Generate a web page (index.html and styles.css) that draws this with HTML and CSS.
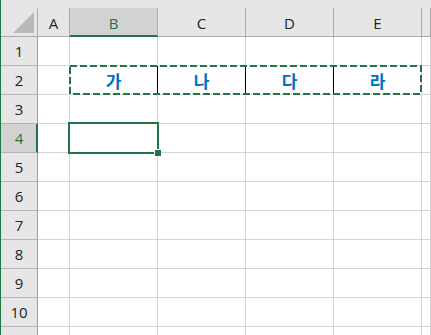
FILE: index.html
```html
<!DOCTYPE html>
<html>
<head>
<meta charset="utf-8">
<link rel="stylesheet" href="styles.css">
</head>
<body>
<div class="app">
  <div class="edge"></div>
  <div class="sheet">
    <div class="strip"></div>
    <div class="grid">
      <div class="corner"></div>
      <div class="ch">A</div><div class="ch sel">B</div><div class="ch">C</div><div class="ch">D</div><div class="ch">E</div><div class="ch"></div>

      <div class="rh">1</div><div class="c"></div><div class="c"></div><div class="c"></div><div class="c"></div><div class="c"></div><div class="c"></div>
      <div class="rh">2</div><div class="c"></div><div class="c k bk">가</div><div class="c k bk">나</div><div class="c k bk">다</div><div class="c k">라</div><div class="c"></div>
      <div class="rh">3</div><div class="c"></div><div class="c"></div><div class="c"></div><div class="c"></div><div class="c"></div><div class="c"></div>
      <div class="rh sel">4</div><div class="c"></div><div class="c"></div><div class="c"></div><div class="c"></div><div class="c"></div><div class="c"></div>
      <div class="rh">5</div><div class="c"></div><div class="c"></div><div class="c"></div><div class="c"></div><div class="c"></div><div class="c"></div>
      <div class="rh">6</div><div class="c"></div><div class="c"></div><div class="c"></div><div class="c"></div><div class="c"></div><div class="c"></div>
      <div class="rh">7</div><div class="c"></div><div class="c"></div><div class="c"></div><div class="c"></div><div class="c"></div><div class="c"></div>
      <div class="rh">8</div><div class="c"></div><div class="c"></div><div class="c"></div><div class="c"></div><div class="c"></div><div class="c"></div>
      <div class="rh">9</div><div class="c"></div><div class="c"></div><div class="c"></div><div class="c"></div><div class="c"></div><div class="c"></div>
      <div class="rh">10</div><div class="c"></div><div class="c"></div><div class="c"></div><div class="c"></div><div class="c"></div><div class="c"></div>
      <div class="rh"></div><div class="c"></div><div class="c"></div><div class="c"></div><div class="c"></div><div class="c"></div><div class="c"></div>
    </div>
  </div>
  <svg class="ants" width="353" height="30" viewBox="0 0 353 30">
    <rect x="1" y="1" width="351" height="28" fill="none" stroke="#217346" stroke-width="2" stroke-dasharray="7 3"/>
  </svg>
  <div class="active"></div>
  <div class="handle"></div>
</div>
</body>
</html>
```
FILE: styles.css
```css
html, body {
  margin: 0;
  padding: 0;
  background: #ffffff;
  overflow: hidden;
}
.app {
  position: relative;
  display: flex;
  width: 431px;
  height: 335px;
  overflow: hidden;
  font-family: "Open Sans", "Liberation Sans", sans-serif;
}
.edge {
  width: 1px;
  background: #217346;
  flex: none;
}
.sheet {
  flex: 1;
  display: flex;
  flex-direction: column;
}
.strip {
  height: 8px;
  background: #e6e6e6;
  flex: none;
}
.grid {
  display: grid;
  grid-template-columns: 37px 32px 88px 88px 88px 88px 1fr;
  grid-template-rows: 29px repeat(11, 29px);
}
.grid > div {
  box-sizing: border-box;
}
.corner {
  position: relative;
  background: #e6e6e6;
  border-right: 1px solid #ababab;
  border-bottom: 1px solid #ababab;
}
.corner::after {
  content: "";
  position: absolute;
  left: 12px;
  top: 4px;
  width: 21px;
  height: 21px;
  background: #b9b9b9;
  clip-path: polygon(100% 0, 100% 100%, 0 100%);
}
.ch {
  background: #e6e6e6;
  border-right: 1px solid #ababab;
  border-bottom: 1px solid #ababab;
  display: flex;
  align-items: center;
  justify-content: center;
  font-size: 15px;
  color: #222222;
  padding-top: 1px;
}
.ch.sel {
  background: #d2d2d2;
  border-bottom: 2px solid #217346;
  color: #217346;
  padding-top: 2px;
}
.rh {
  background: #e6e6e6;
  border-right: 1px solid #9e9e9e;
  border-bottom: 1px solid #b4b4b4;
  display: flex;
  align-items: center;
  justify-content: center;
  font-size: 15px;
  color: #222222;
}
.rh.sel {
  background: #d2d2d2;
  border-right: 2px solid #217346;
  color: #217346;
  padding-left: 1px;
}
.c {
  border-right: 1px solid #d4d4d4;
  border-bottom: 1px solid #d4d4d4;
}
.k {
  display: flex;
  align-items: center;
  justify-content: center;
  font-family: "Noto Sans CJK KR", sans-serif;
  font-weight: bold;
  font-size: 17px;
  color: #0070c0;
}
.c.bk {
  border-right-color: #000000;
}
.ants {
  position: absolute;
  left: 69px;
  top: 65px;
}
.active {
  position: absolute;
  left: 68px;
  top: 122px;
  width: 91px;
  height: 32px;
  box-sizing: border-box;
  border: 2px solid #217346;
}
.handle {
  position: absolute;
  left: 154px;
  top: 149px;
  width: 7px;
  height: 7px;
  box-sizing: border-box;
  background: #217346;
  border-left: 1px solid #ffffff;
  border-top: 1px solid #ffffff;
}
```
